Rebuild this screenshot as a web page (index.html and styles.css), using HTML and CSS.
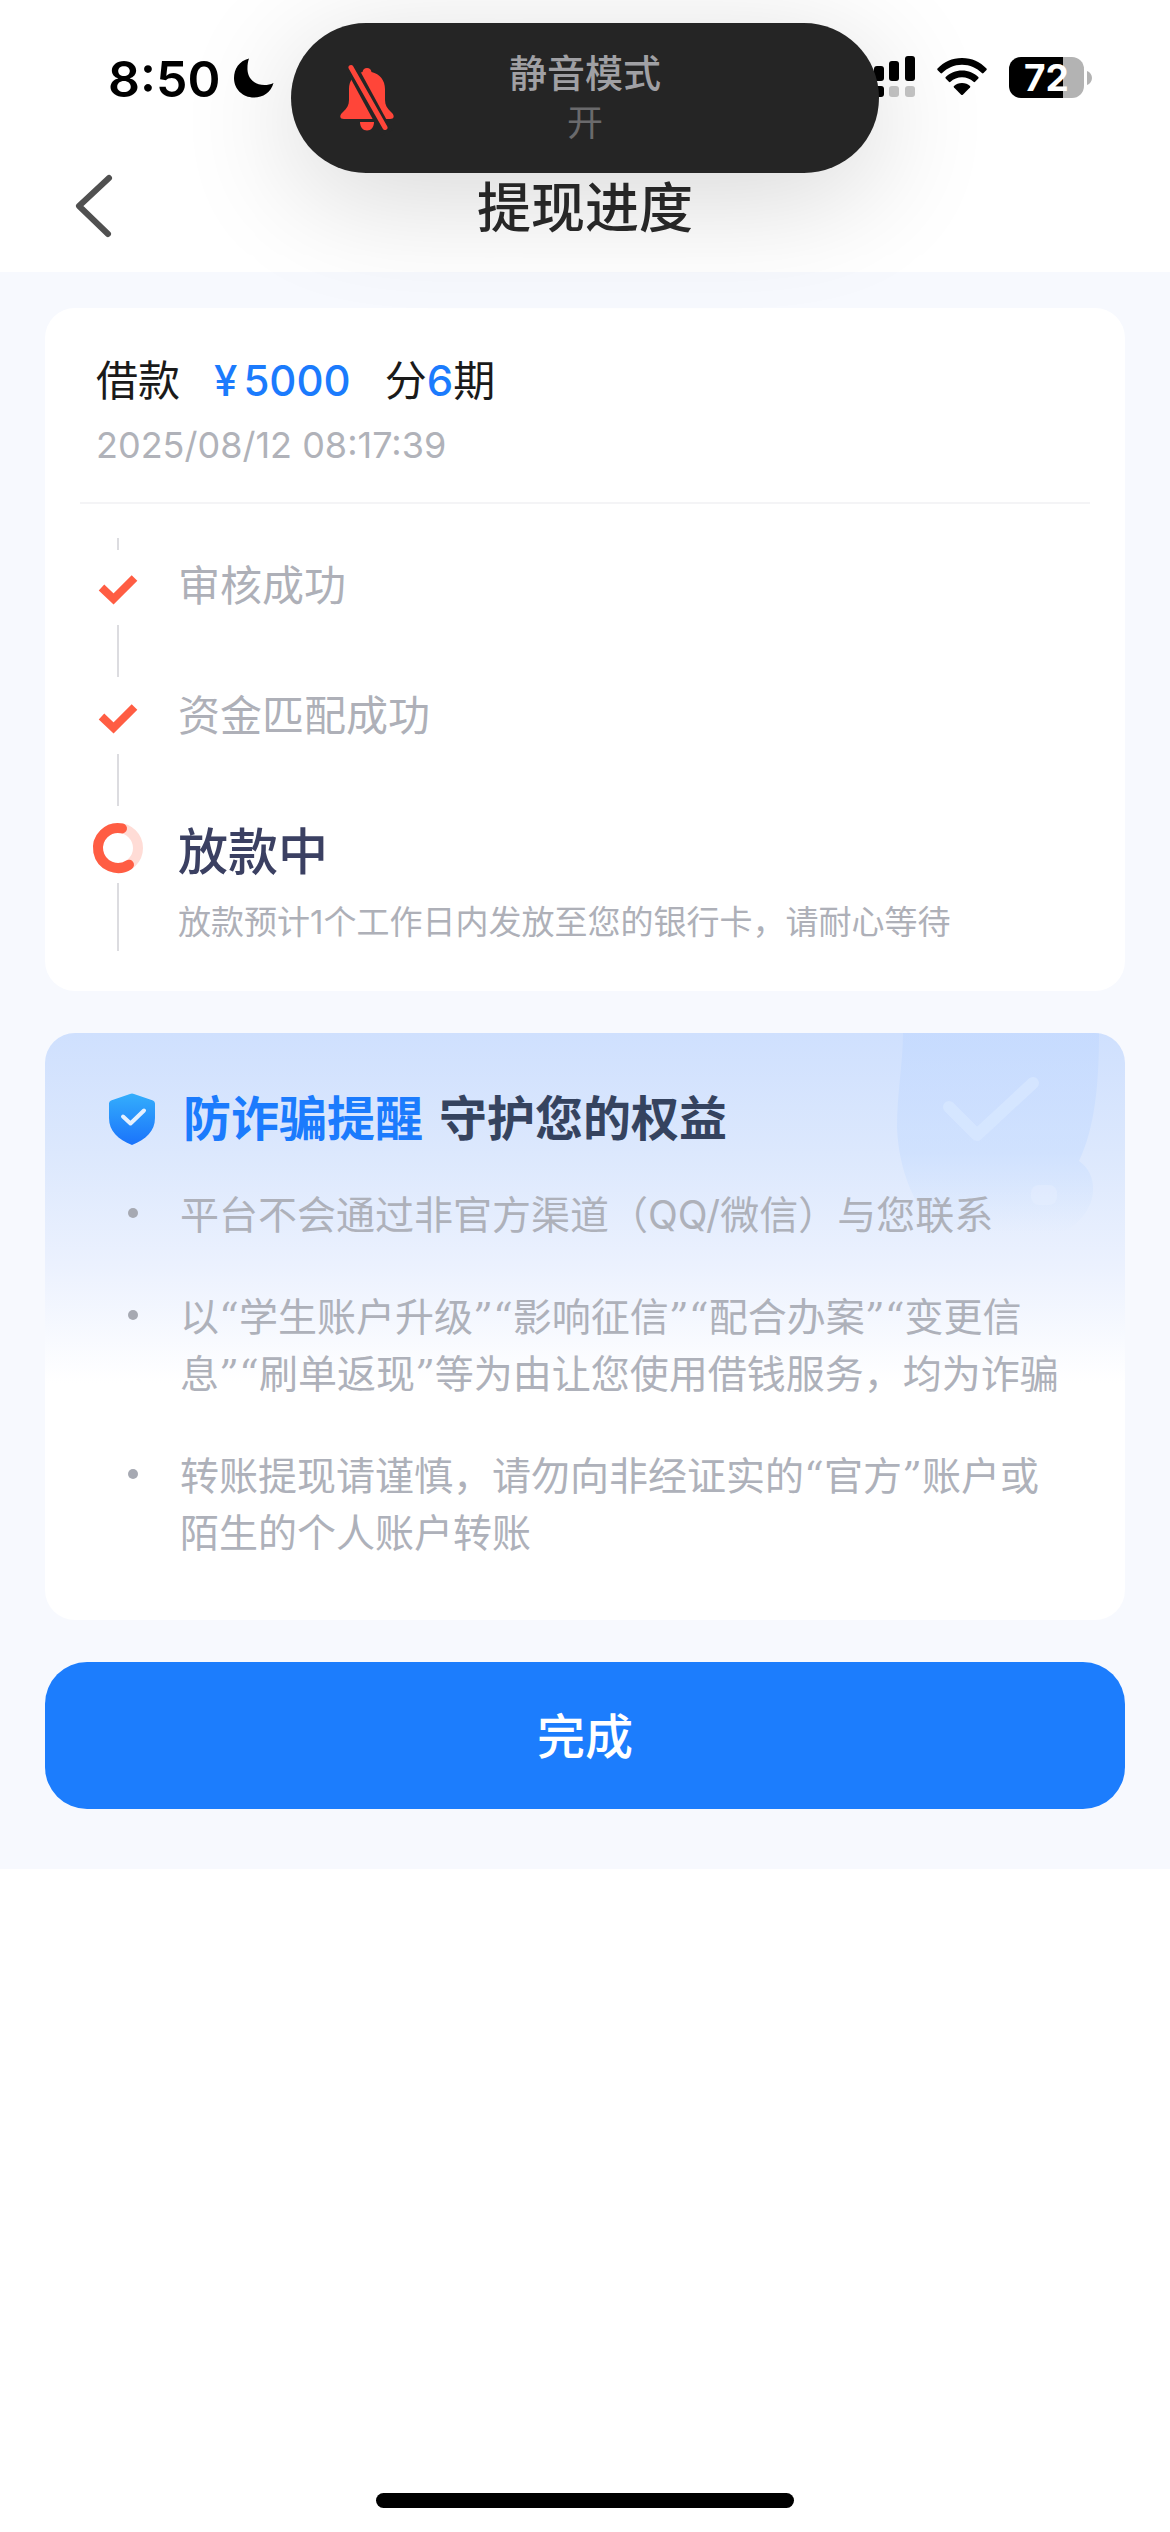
FILE: index.html
```html
<!DOCTYPE html>
<html lang="zh-CN">
<head>
<meta charset="utf-8">
<meta name="viewport" content="width=device-width, initial-scale=1">
<title>提现进度</title>
<link rel="stylesheet" href="styles.css">
</head>
<body>
<div class="screen">
  <header class="header">
    <div class="status">
      <div class="status-left">
        <span class="time">8:50</span>
        <svg class="moon" viewBox="0 0 40 40" aria-hidden="true"><path d="M15 0.500C5 3 0 11 0 20c0 11 8.500 19.500 20 19.500 9 0 17-5 19.500-14.500-3 1.500-6 2-9 2C20 27 14 20 13.500 12c-.2-4.500.3-8 1.500-11.500z"/></svg>
      </div>
      <div class="status-right">
        <svg class="signal" viewBox="0 0 56 42" aria-hidden="true">
          <g fill="#000"><rect x="0" y="15" width="10" height="11" rx="3"/><rect x="15" y="10" width="10" height="15" rx="3"/><rect x="30" y="5" width="10" height="20" rx="3"/><rect x="46" y="0" width="10" height="25" rx="3"/><rect x="0" y="30" width="10" height="11" rx="3"/><rect x="15" y="30" width="10" height="11" rx="3"/></g>
          <g fill="#c6c6c6"><rect x="30" y="30" width="10" height="11" rx="3"/><rect x="46" y="30" width="10" height="11" rx="3"/></g>
        </svg>
        <svg class="wifi" viewBox="0 0 50 38" aria-hidden="true">
          <path d="M25 0C35 0 43 4 49.500 10.500q.6.7 0 1.500l-3 3q-.8.800-1.600 0C39.500 10 33 6.800 25 6.800S10.500 10 5.100 15q-.8.800-1.600 0l-3-3q-.6-.8 0-1.500C7 4 15 0 25 0z"/>
          <path d="M25 12.500c6.500 0 12 2.500 16.300 6.500q.7.8 0 1.600l-3.200 3.200q-.8.700-1.600 0C33.300 21 29.500 19.300 25 19.300S16.700 21 13.500 23.800q-.8.700-1.600 0l-3.200-3.200q-.7-.8 0-1.600C13 15 18.500 12.500 25 12.500z"/>
          <path d="M25 25c3.200 0 6 1.200 8 3q.8.800 0 1.600l-7.200 7.100q-.8.700-1.600 0L17 29.600q-.8-.8 0-1.600c2-1.800 4.800-3 8-3z"/>
        </svg>
        <div class="battery"><span class="battery-body">72</span><svg class="battery-tip" viewBox="0 0 5 14" aria-hidden="true"><path d="M0 0c3 1 5 4 5 7s-2 6-5 7z"/></svg></div>
      </div>
    </div>
    <nav class="nav">
      <button class="back" type="button" aria-label="返回"><svg viewBox="0 0 36 62" aria-hidden="true"><path d="M33 3 3 31l29 28"/></svg></button>
      <h1 class="title">提现进度</h1>
    </nav>
    <div class="island" role="status">
      <svg class="bell" viewBox="0 0 54 66" aria-hidden="true">
        <path fill="#ff4539" d="M27 3c2.500 0 4 1.500 4.500 4C40 9 45 15.500 45 24v11c0 5 2 8.500 6 12 4 3.500 3.500 7-1 7H4c-4.500 0-5-3.500-1-7 4-3.500 6-7 6-12V24C9 15.500 14 9 22.500 7 23 4.500 24.500 3 27 3z"/>
        <path fill="#ff4539" d="M20 57h14c0 5-3 8.500-7 8.500s-7-3.500-7-8.500z"/>
        <path stroke="#252525" stroke-width="12" d="M9 -2l38 70"/>
        <path stroke="#ff4539" stroke-width="5" stroke-linecap="round" d="M11 2.500l34 60"/>
      </svg>
      <div class="island-text"><span class="island-mode">静音模式</span><span class="island-state">开</span></div>
    </div>
  </header>

  <main class="content">
    <section class="card loan">
      <div class="summary">
        <p class="loan-line"><span>借款</span><span class="amount"><span>¥</span><span>5000</span></span><span>分<span class="periods">6</span>期</span></p>
        <p class="date">2025/08/12 08:17:39</p>
      </div>
      <ol class="steps">
        <li class="step">
          <span class="rail"><i class="line lead"></i><svg class="tick" viewBox="0 0 40 30" aria-hidden="true"><path d="M3.500 13.500 15.500 25 36.500 4"/></svg><i class="line"></i></span>
          <span class="label">审核成功</span>
        </li>
        <li class="step">
          <span class="rail"><svg class="tick" viewBox="0 0 40 30" aria-hidden="true"><path d="M3.500 13.500 15.500 25 36.500 4"/></svg><i class="line"></i></span>
          <span class="label">资金匹配成功</span>
        </li>
        <li class="step current">
          <span class="rail"><svg class="ring" viewBox="0 0 52 50" aria-hidden="true"><circle cx="26" cy="25" r="20" stroke="#ffdcd6"/><path stroke="#ff5d43" stroke-linecap="round" d="M30 5.400A20 20 0 1 0 37 41.700"/></svg><i class="line"></i></span>
          <div class="detail"><strong class="now">放款中</strong><span class="note">放款预计1个工作日内发放至您的银行卡，请耐心等待</span></div>
        </li>
      </ol>
    </section>

    <section class="card safety">
      <svg class="watermark" viewBox="0 0 206 220" aria-hidden="true">
        <defs>
          <linearGradient id="wm" x1="0" y1="0" x2="0" y2="1"><stop offset="0" stop-color="#c1d8ff" stop-opacity=".6"/><stop offset=".6" stop-color="#c8ddff" stop-opacity=".6"/><stop offset="1" stop-color="#cfe2ff" stop-opacity="0"/></linearGradient>
        </defs>
        <path fill="url(#wm)" d="M6 0h196c0 50-4 95-20 128q14 10 14 28c0 20-14 34-30 44H40C18 172 2 140 0 95 0 60 6 30 6 0z"/>
        <path fill="none" stroke="#d9e8ff" stroke-width="12" stroke-opacity=".7" stroke-linecap="round" stroke-linejoin="round" d="M52 74l28 28 56-52"/>
        <rect x="134" y="152" width="26" height="20" rx="8" fill="#e8f1ff" fill-opacity=".4"/>
      </svg>
      <h2 class="safety-title">
        <svg class="shield" viewBox="0 0 46 52" aria-hidden="true">
          <defs><linearGradient id="sg" x1="0" y1="0" x2="0" y2="1"><stop offset="0" stop-color="#34aefc"/><stop offset="1" stop-color="#1a73fb"/></linearGradient></defs>
          <path fill="url(#sg)" d="M21 1q2-1 4 0l19 6.500q2 1 2 3V25c0 13-9 21.500-23 27C9 46.500 0 38 0 25V10.500q0-2 2-3z"/>
          <path fill="none" stroke="#e4f0ff" stroke-width="4" stroke-linecap="round" stroke-linejoin="round" d="M14 23.500l7.500 7L35 17.500"/>
        </svg>
        <span class="warn">防诈骗提醒</span><span>守护您的权益</span>
      </h2>
      <ul class="tips">
        <li>平台不会通过非官方渠道（QQ/微信）与您联系</li>
        <li>以<span class="quoted">“学生账户升级”“影响征信”“配合办案”“变更信息”“刷单返现”</span>等为由让您使用借钱服务，均为诈骗</li>
        <li>转账提现请谨慎，请勿向非经证实的<span class="quoted">“官方”</span>账户或陌生的个人账户转账</li>
      </ul>
    </section>

    <button class="done" type="button">完成</button>
  </main>
  <div class="home"></div>
</div>
</body>
</html>
```

FILE: styles.css
```css
* { box-sizing: border-box; }
body, h1, h2, p, ol, ul { margin: 0; padding: 0; }
ol, ul { list-style: none; }
button { border: 0; padding: 0; background: none; font: inherit; cursor: pointer; }
svg { display: block; flex: none; overflow: visible; }

body {
  background: #fff;
  color: #1a1a1a;
  font-family: Inter, "Noto Sans CJK SC", sans-serif;
}
.screen { display: flex; flex-direction: column; min-height: 100vh; }

/* status bar and navigation */
.header { position: relative; background: #fff; height: 272px; }
.status {
  display: flex; justify-content: space-between; align-items: flex-end;
  height: 98px; padding: 0 78px 0 108px;
}
.status-left, .status-right { display: flex; align-items: flex-end; }
.status-left { gap: 14px; }
.time { font-size: 50px; font-weight: 600; line-height: 38px; color: #000; }
.moon { width: 40px; height: 40px; }
.status-right { gap: 22px; }
.signal { width: 56px; height: 42px; }
.wifi { width: 50px; height: 38px; align-self: center; }
.battery { display: flex; align-items: center; gap: 3px; }
.battery-body {
  width: 75px; height: 41px; border-radius: 12px;
  background: linear-gradient(90deg, #000 72%, #b3b3b3 72%);
  color: #fff; font-size: 37px; font-weight: 700; line-height: 41px; text-align: center;
}
.battery-tip { width: 5px; height: 14px; fill: #b3b3b3; }
.nav {
  display: grid; grid-template-columns: 120px 1fr 120px; align-items: start;
  margin-top: 77px;
}
.back { width: 36px; height: 62px; margin-left: 76px; }
.back svg { width: 36px; height: 62px; fill: none; stroke: #505050; stroke-width: 6; stroke-linecap: round; stroke-linejoin: round; }
.title { font-size: 54px; font-weight: 500; line-height: 68px; text-align: center; color: #2a2a2a; }

.island {
  position: absolute; top: 23px; left: 50%; transform: translateX(-50%);
  width: 588px; height: 150px; border-radius: 75px;
  background: #252525; box-shadow: 0 24px 120px rgba(0, 0, 0, .16);
  display: grid; grid-template-columns: 102px 1fr 102px; align-items: center;
}
.bell { width: 54px; height: 66px; margin-left: 49px; fill: none; }
.island-text { display: flex; flex-direction: column; align-items: center; }
.island-mode { font-size: 38px; font-weight: 500; line-height: 50px; color: #a0a0a4; }
.island-state { font-size: 36px; line-height: 50px; color: #6a6a6c; }

/* content */
.content { display: flex; flex-direction: column; gap: 42px; padding: 36px 45px 60px; background: #f7f9fe; }
.card { border-radius: 30px; background: #fff; }

.loan { padding: 0 35px 40px; }
.summary { padding: 46px 16px 30px; border-bottom: 2px solid #f4f4f6; }
.loan-line { display: flex; gap: 34px; font-size: 42px; line-height: 54px; }
.amount { display: flex; gap: 6px; }
.amount, .periods { color: #1b7bfd; font-weight: 500; }
.date { margin-top: 10px; font-size: 36px; line-height: 54px; color: #b0b2b9; }

.steps { padding: 34px 10px 0; }
.step { display: flex; gap: 32px; }
.rail { display: flex; flex-direction: column; align-items: center; width: 56px; }
.line { width: 2px; height: 52px; margin: 21px 0 26px; background: #dcdce0; }
.line.lead { height: 12px; margin: 0 0 24px; }
.tick { width: 40px; height: 30px; fill: none; stroke: #ff5d43; stroke-width: 8; }
.label { font-size: 42px; line-height: 54px; color: #aeb0b8; margin-top: -14px; }
.step:first-child .label { margin-top: 21px; }
.ring { width: 52px; height: 50px; margin-top: -9px; fill: none; stroke-width: 10; }
.current .line { height: 68px; margin: 10px 0 0; }
.detail { display: flex; flex-direction: column; gap: 14px; margin-top: -12px; }
.now { font-size: 50px; font-weight: 500; line-height: 64px; color: #3b4062; }
.note { font-size: 33px; line-height: 48px; color: #aeb0b8; }

.safety {
  position: relative; overflow: hidden;
  padding: 56px 60px 59px 64px;
  background: linear-gradient(#cfe0fe 0, #dce8fd 120px, #ebf1fe 230px, #fff 350px);
}
.watermark { position: absolute; top: 0; right: 22px; width: 206px; height: 220px; }
.safety-title { position: relative; display: flex; align-items: center; font-size: 48px; line-height: 60px; font-weight: 700; color: #35435f; }
.shield { width: 46px; height: 52px; margin-right: 28px; }
.warn { margin-right: 16px; color: #1b7bfd; }
.tips { position: relative; display: flex; flex-direction: column; gap: 45px; margin-top: 37px; }
.tips li { position: relative; padding-left: 71px; font-size: 39px; line-height: 57px; color: #aeb1ba; }
.tips li::before {
  content: ""; position: absolute; left: 19px; top: 22px;
  width: 10px; height: 10px; border-radius: 50%; background: #a6a9b2;
}
/* curly quotation marks come from the serif face, the hanzi from the CJK one */
.quoted { font-family: "DejaVu Serif", "Noto Sans CJK SC", serif; line-height: 1; }

.done {
  height: 147px; padding-bottom: 5px; border-radius: 42px; background: #1c7dfd;
  color: #fff; font-size: 48px; font-weight: 500;
}

.home { width: 418px; height: 15px; margin: auto auto 24px; border-radius: 8px; background: #000; }
```
